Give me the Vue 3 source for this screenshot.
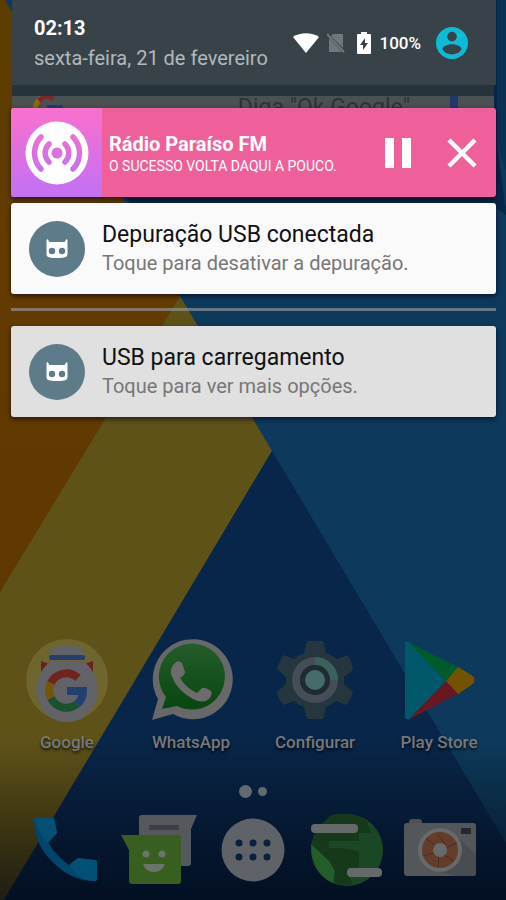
<script setup>
import { ref } from 'vue'

const playing = ref(true)
const radioOpen = ref(true)

const notifications = [
  { title: 'Depuração USB conectada', text: 'Toque para desativar a depuração.', quiet: false },
  { title: 'USB para carregamento', text: 'Toque para ver mais opções.', quiet: true },
]
</script>

<template>
  <main class="screen">
    <svg class="wallpaper" viewBox="0 0 506 900" preserveAspectRatio="none" aria-hidden="true">
      <defs>
        <linearGradient id="fade" x1="0" y1="0" x2="0" y2="1">
          <stop offset="0" stop-color="#000" stop-opacity="0" />
          <stop offset="1" stop-color="#000511" stop-opacity=".68" />
        </linearGradient>
        <linearGradient id="orange" x1="0" y1="0" x2="0" y2="1">
          <stop offset="0" stop-color="#5c3d03" />
          <stop offset=".5" stop-color="#643c00" />
          <stop offset="1" stop-color="#5f3700" />
        </linearGradient>
      </defs>
      <rect width="506" height="900" fill="#0d3a5c" />
      <path d="M12 0H506V28L497 145L506 210V215L490 203H130Z" fill="#072647" />
      <path d="M497 0H506V170L497 145Z" fill="#0a3153" />
      <path d="M0-8L180 296L0 596Z" fill="url(#orange)" />
      <path d="M180 296L272 451L4 900H0V592Z" fill="#5f5218" />
      <path d="M272 451L540 900H4Z" fill="#08264a" />
      <rect y="740" width="506" height="160" fill="url(#fade)" />
    </svg>

    <header class="status">
      <div class="when">
        <time class="clock">02:13</time>
        <span class="date">sexta-feira, 21 de fevereiro</span>
      </div>
      <div class="indicators">
        <svg class="wifi" viewBox="0 0 26 20" aria-hidden="true">
          <path d="M0 4C7-1 19-1 26 4L13 20Z" fill="#fff" />
        </svg>
        <svg class="sim" viewBox="0 0 18 20" aria-hidden="true">
          <path d="M6 1H16V15L4 3ZM2 5L15 19H2Z" fill="#6f777b" />
          <path d="M0 1L17 19" stroke="#6f777b" stroke-width="2" />
        </svg>
        <svg class="battery" viewBox="0 0 14 22" aria-hidden="true">
          <path d="M4 0H10V2H13Q14 2 14 3V21Q14 22 13 22H1Q0 22 0 21V3Q0 2 1 2H4Z" fill="#fff" />
          <path d="M8 6L3 13H6V18L11 11H8Z" fill="#384349" />
        </svg>
        <span class="percent">100%</span>
        <button class="user" type="button" aria-label="Usuário">
          <svg viewBox="0 0 24 24" aria-hidden="true">
            <path d="M12 0a12 12 0 1 0 0 24a12 12 0 0 0 0-24zm0 3.600a3.600 3.600 0 1 1 0 7.200a3.600 3.600 0 0 1 0-7.200zm0 17a8.600 8.600 0 0 1-7.200-3.900c0-2.400 4.800-3.700 7.200-3.700s7.200 1.300 7.200 3.700a8.600 8.600 0 0 1-7.200 3.900z" fill="#0cbcd6" />
          </svg>
        </button>
      </div>
    </header>

    <div class="search">
      <svg class="search-g" viewBox="0 0 34 12" aria-hidden="true">
        <path d="M3 12C4 7 6 4 10 1" fill="none" stroke="#896b0d" stroke-width="5" />
        <path d="M5 3C9-2 20-2 23 1L20 5C15 1 11 3 9 7Z" fill="#7d2825" />
        <path d="M15 9H31V12H15Z" fill="#213c78" />
      </svg>
      <span class="hint">Diga "Ok Google"</span>
      <span class="mic"></span>
    </div>

    <section class="shade">
      <article v-if="radioOpen" class="radio">
        <div class="cover">
          <svg viewBox="0 0 64 64" aria-hidden="true">
            <defs>
              <linearGradient id="wave" x1="0" y1="12" x2="0" y2="52" gradientUnits="userSpaceOnUse">
                <stop offset="0" stop-color="#f06fd0" />
                <stop offset="1" stop-color="#c472f0" />
              </linearGradient>
            </defs>
            <circle cx="32" cy="32" r="31.500" fill="#fff" />
            <circle cx="32" cy="32" r="5.500" fill="url(#wave)" />
            <g fill="none" stroke="url(#wave)" stroke-width="5.500" stroke-linecap="round">
              <path d="M24 23A12.500 12.500 0 0 0 24 41" />
              <path d="M40 23A12.500 12.500 0 0 1 40 41" />
              <path d="M16 16A23 23 0 0 0 16 48" />
              <path d="M48 16A23 23 0 0 1 48 48" />
            </g>
          </svg>
        </div>
        <div class="track">
          <h2>Rádio Paraíso FM</h2>
          <p>O SUCESSO VOLTA DAQUI A POUCO.</p>
        </div>
        <div class="controls">
          <button type="button" :aria-label="playing ? 'Pausar' : 'Tocar'" @click="playing = !playing">
            <svg viewBox="0 0 30 30" aria-hidden="true">
              <path v-if="playing" d="M2 0H11V30H2ZM19 0H28V30H19Z" fill="#fff" />
              <path v-else d="M5 0L28 15L5 30Z" fill="#fff" />
            </svg>
          </button>
          <button type="button" aria-label="Fechar" @click="radioOpen = false">
            <svg viewBox="0 0 30 30" aria-hidden="true">
              <path d="M2 2L28 28M28 2L2 28" stroke="#fff" stroke-width="4.500" />
            </svg>
          </button>
        </div>
      </article>

      <template v-for="n in notifications" :key="n.title">
        <hr v-if="n.quiet" class="divider">
        <article class="note" :class="{ quiet: n.quiet }">
          <svg class="badge" viewBox="0 0 56 56" aria-hidden="true">
            <circle cx="28" cy="28" r="28" fill="#5d7b88" />
            <path d="M18.500 18L20.500 21H35.500L37.500 18L38.500 19V33Q38.500 36 35 36.500Q28 37.500 21 36.500Q17.500 36 17.500 33V19Z" fill="#fff" />
            <circle cx="23" cy="30" r="3.200" fill="#5d7b88" />
            <circle cx="33" cy="30" r="3.200" fill="#5d7b88" />
          </svg>
          <div class="body">
            <h2>{{ n.title }}</h2>
            <p>{{ n.text }}</p>
          </div>
        </article>
      </template>
    </section>

    <nav class="apps">
      <a class="app" href="#google">
        <svg viewBox="0 0 84 84" aria-hidden="true">
          <circle cx="42" cy="42" r="41" fill="#6f652f" />
          <path d="M27 10Q42 4 57 10L61 21H23Z" fill="#626269" />
          <rect x="24" y="17" width="36" height="5" rx="2" fill="#243e70" />
          <path d="M16 23L27 27L16 38ZM68 23L57 27L68 38Z" fill="#6d211d" />
          <path d="M26 23H58Q68 30 72 44Q74 53 71 62Q62 84 42 84Q22 84 13 62Q10 53 12 44Q16 30 26 23Z" fill="#626269" />
          <g fill="none" stroke-width="8">
            <path d="M53 40A17 17 0 0 0 26 45" stroke="#70241f" />
            <path d="M26 45A17 17 0 0 0 26 60" stroke="#735503" />
            <path d="M26 60A17 17 0 0 0 52 66" stroke="#19532d" />
            <path d="M42 53H58A17 17 0 0 1 52 66" stroke="#223f70" />
          </g>
        </svg>
        <span>Google</span>
      </a>
      <a class="app" href="#whatsapp">
        <svg viewBox="0 0 84 84" aria-hidden="true">
          <defs>
            <linearGradient id="wa" x1="0" y1="0" x2="0" y2="1">
              <stop offset="0" stop-color="#255d2b" />
              <stop offset="1" stop-color="#074610" />
            </linearGradient>
          </defs>
          <path d="M3 82L9 61A40 40 0 1 1 24 76Z" fill="#686868" />
          <path d="M13 71L17 59A33 33 0 1 1 28 68Z" fill="url(#wa)" />
          <path d="M27 24Q30 22 33 25L36 34Q36 37 31 40Q37 50 48 55L53 50Q56 49 62 53Q64 56 60 61Q54 66 44 61Q27 52 22 36Q21 29 27 24Z" fill="#6c6c6c" />
        </svg>
        <span>WhatsApp</span>
      </a>
      <a class="app" href="#configurar">
        <svg viewBox="0 0 84 84" aria-hidden="true">
          <path d="M34 3H50L53 15Q59 17 64 21L74 17Q79 22 80 32L71 39V46L80 54Q78 62 73 67L63 63Q58 67 53 69L50 81H34L31 69Q25 67 21 63L11 67Q5 62 4 54L13 46V39L4 31Q6 23 11 17L21 21Q26 17 31 15Z" fill="#25363e" />
          <circle cx="42" cy="42" r="19" fill="#253036" stroke="#454e57" stroke-width="8" />
          <path d="M42 23A19 19 0 0 1 61 42" fill="none" stroke="#3b615f" stroke-width="8" />
          <circle cx="42" cy="42" r="12.500" fill="#456c68" stroke="#202b31" stroke-width="5" />
        </svg>
        <span>Configurar</span>
      </a>
      <a class="app" href="#play">
        <svg viewBox="0 0 84 84" aria-hidden="true">
          <path d="M8 4L12 4L49 43L12 82L8 80Z" fill="#00586a" />
          <path d="M11 4L62 30L49 43Z" fill="#005b2b" />
          <path d="M49 43L62 55L11 82Z" fill="#69181f" />
          <path d="M61 29L76 38Q79 42 76 46L61 56L49 43Z" fill="#735200" />
        </svg>
        <span>Play Store</span>
      </a>
    </nav>

    <div class="pages" aria-hidden="true">
      <span class="dot current"></span>
      <span class="dot"></span>
    </div>

    <nav class="dock">
      <a href="#telefone" aria-label="Telefone">
        <svg viewBox="0 0 76 76" aria-hidden="true">
          <path d="M6 7Q6 5 8 5H26L29 20L20 29Q27 42 41 52L50 45L67 47Q69 47 69 49V66Q69 68 67 68Q46 68 30 54Q6 34 6 7Z" fill="#00466c" />
          <path d="M6 7Q6 5 8 5H26L29 20L20 30Q12 22 6 7ZM41 52L50 45L67 47Q69 47 69 49V66Q69 68 67 68Q52 68 41 52Z" fill="#025174" />
        </svg>
      </a>
      <a href="#mensagens" aria-label="Mensagens">
        <svg viewBox="0 0 76 76" aria-hidden="true">
          <path d="M21 2H76L70 16V50Q70 53 67 53H21Q18 53 18 50V5Q18 2 21 2Z" fill="#55585c" />
          <rect x="28" y="12" width="30" height="5" rx="1" fill="#3c3f43" />
          <path d="M0 22H57Q60 22 60 25V68Q60 71 57 71H11Q8 71 8 68V37Z" fill="#395f20" />
          <g fill="#69746a">
            <circle cx="25" cy="41" r="3.500" />
            <circle cx="41" cy="41" r="3.500" />
            <path d="M22 51H44Q41 59 33 59Q25 59 22 51Z" />
          </g>
        </svg>
      </a>
      <a href="#aplicativos" aria-label="Aplicativos">
        <svg viewBox="0 0 76 76" aria-hidden="true">
          <circle cx="38" cy="37" r="31.500" fill="#5f6267" />
          <g fill="#09203f">
            <circle cx="24" cy="30" r="3.500" /><circle cx="38" cy="30" r="3.500" /><circle cx="52" cy="30" r="3.500" />
            <circle cx="24" cy="44" r="3.500" /><circle cx="38" cy="44" r="3.500" /><circle cx="52" cy="44" r="3.500" />
          </g>
        </svg>
      </a>
      <a href="#navegador" aria-label="Navegador">
        <svg viewBox="0 0 76 76" aria-hidden="true">
          <circle cx="38" cy="37" r="36" fill="#1b4824" />
          <path d="M7 18L14 10L22 2Q42-2 58 8L62 20H50V28H20V35H30L50 38V56H38L44 73Q25 73 20 63L24 54L16 44L2 34Z" fill="#17391b" />
          <path d="M2 31L20 48L26 58L24 70Q2 60 2 31Z" fill="#235d29" />
          <rect x="2" y="11" width="47" height="9" rx="4" fill="#65696a" />
          <rect x="38" y="55" width="35" height="9" rx="4" fill="#65696a" />
        </svg>
      </a>
      <a href="#camera" aria-label="Câmera">
        <svg viewBox="0 0 76 76" aria-hidden="true">
          <path d="M7 9Q7 6 10 6H17Q20 6 20 9V14H7Z" fill="#4e5052" />
          <rect x="2" y="10" width="72" height="53" rx="3" fill="#54575a" />
          <path d="M54 22L74 42V60Q74 63 71 63H54L28 56Z" fill="#494c50" />
          <rect x="59" y="15" width="10" height="6" fill="#25292d" />
          <circle cx="38" cy="37" r="22" fill="#676a6c" />
          <circle cx="38" cy="37" r="12" fill="none" stroke="#653c29" stroke-width="12" />
          <path d="M35 20L43 31M55 30L44 35M52 48L42 42M36 54L37 43M21 43L32 40M24 25L33 32" stroke="#4b2c23" stroke-width="1" />
          <circle cx="38" cy="37" r="7" fill="#676a6c" />
        </svg>
      </a>
    </nav>
  </main>
</template>

<style>
body {
  margin: 0;
  background: #08264a;
}
</style>

<style scoped>
.screen {
  position: relative;
  isolation: isolate;
  display: flex;
  flex-direction: column;
  box-sizing: border-box;
  min-height: 100vh;
  overflow: hidden;
  font-family: Roboto, "Liberation Sans", sans-serif;
}

.wallpaper {
  position: absolute;
  inset: 0;
  z-index: -1;
  width: 100%;
  height: 100%;
}

svg {
  display: block;
}

h2,
p {
  margin: 0;
}

button {
  padding: 0;
  border: 0;
  background: none;
  cursor: pointer;
}

.status {
  display: flex;
  align-items: center;
  justify-content: space-between;
  box-sizing: border-box;
  height: 85px;
  margin: 0 10px 0 12px;
  padding: 1px 28px 0 22px;
  background: #384349;
}

.when {
  display: flex;
  flex-direction: column;
}

.clock {
  font-size: 20px;
  font-weight: 700;
  line-height: 30px;
  color: #fff;
}

.date {
  font-size: 20px;
  line-height: 30px;
  color: #b2b8bb;
}

.indicators {
  display: flex;
  align-items: center;
}

.wifi {
  width: 26px;
  height: 20px;
  margin-right: 8px;
}

.sim {
  width: 18px;
  height: 20px;
  margin-right: 12px;
}

.battery {
  width: 14px;
  height: 22px;
  margin-right: 8px;
}

.percent {
  font-size: 17px;
  font-weight: 500;
  line-height: 24px;
  color: #fff;
}

.user {
  width: 32px;
  height: 32px;
  margin-left: 15px;
}

.user svg {
  width: 32px;
  height: 32px;
}

.search {
  display: flex;
  height: 12px;
  margin: 0 12px;
  padding: 0 20px;
  overflow: hidden;
  border-top: 11px solid #26333a;
  background: #4a5153;
}

.search-g {
  width: 34px;
  height: 12px;
}

.hint {
  margin-left: auto;
  font-size: 23px;
  line-height: 24px;
  color: #2d3335;
}

.mic {
  width: 8px;
  height: 12px;
  margin: 0 16px 0 40px;
  background: #20386b;
}

.shade {
  display: flex;
  flex-direction: column;
  margin: 0 10px 0 11px;
}

.radio,
.note {
  display: flex;
  align-items: center;
  overflow: hidden;
  border-radius: 3px;
  box-shadow: 0 2px 5px rgba(10, 0, 30, 0.7);
}

.radio {
  height: 89px;
  margin-bottom: 6px;
  background: #ef609b;
}

.cover {
  display: flex;
  align-items: center;
  justify-content: center;
  width: 91px;
  height: 100%;
  background: linear-gradient(#fa70cd, #c071f4);
}

.cover svg {
  width: 64px;
  height: 64px;
}

.track {
  flex: 1;
  padding: 2px 0 0 7px;
  color: #fff;
}

.track h2 {
  font-size: 20px;
  font-weight: 700;
  line-height: 24px;
}

.track p {
  font-size: 14px;
  line-height: 20px;
}

.controls {
  display: flex;
  gap: 34px;
  margin-right: 19px;
}

.controls svg {
  width: 30px;
  height: 30px;
}

.note {
  height: 91px;
  background: #fafafa;
}

.quiet {
  background: #e0e0e0;
}

.badge {
  width: 56px;
  height: 56px;
  margin: 0 17px 0 18px;
}

.body h2 {
  font-size: 23px;
  font-weight: 400;
  line-height: 30px;
  color: #111;
}

.body p {
  font-size: 20px;
  line-height: 27px;
  color: #777;
}

.divider {
  width: 100%;
  height: 3px;
  margin: 14px 0 15px;
  border: 0;
  background: rgba(150, 150, 150, 0.65);
}

.apps {
  display: grid;
  grid-template-columns: repeat(4, 1fr);
  margin-top: auto;
  padding: 0 5px;
}

.app {
  display: flex;
  flex-direction: column;
  align-items: center;
  gap: 8px;
  font-size: 17px;
  font-weight: 500;
  line-height: 24px;
  color: #77787a;
  text-decoration: none;
  text-shadow: 0 2px 3px rgba(0, 0, 0, 0.8);
}

.app svg {
  width: 84px;
  height: 84px;
}

.pages {
  display: flex;
  align-items: center;
  justify-content: center;
  gap: 6px;
  height: 13px;
  margin: 31px 0 15px;
}

.dot {
  width: 9px;
  height: 9px;
  border-radius: 50%;
  background: #626972;
}

.current {
  width: 13px;
  height: 13px;
}

.dock {
  display: grid;
  grid-template-columns: repeat(5, 1fr);
  justify-items: center;
  padding: 0 19px 11px;
}

.dock svg {
  width: 76px;
  height: 76px;
}
</style>
